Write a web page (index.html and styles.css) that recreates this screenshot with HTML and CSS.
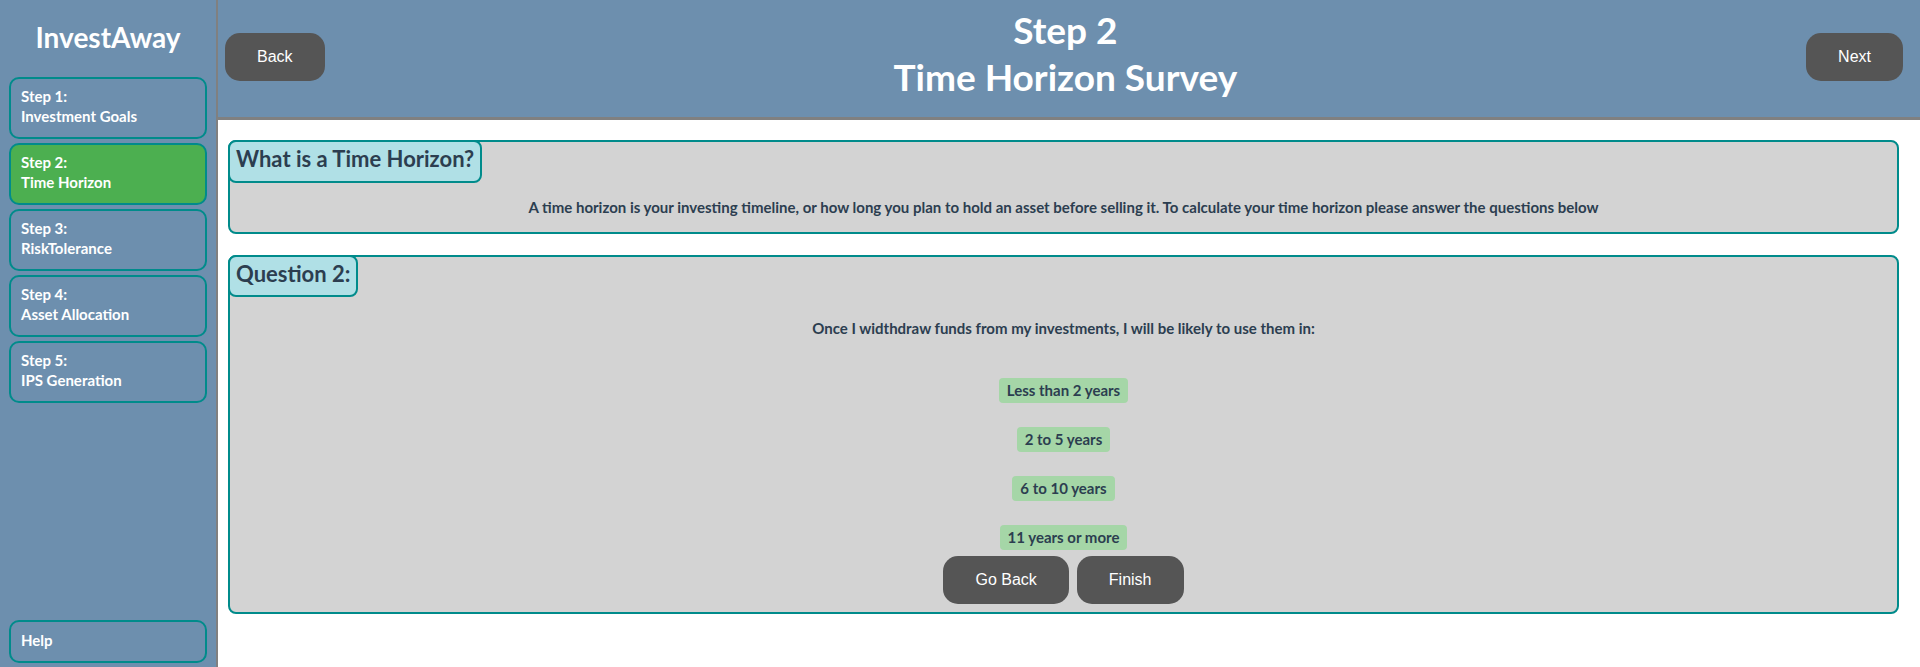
FILE: index.html
```html
<!DOCTYPE html>
<html lang="en">
<head>
<meta charset="utf-8">
<title>InvestAway - Time Horizon</title>
<link rel="stylesheet" href="styles.css">
</head>
<body>
<div class="app">
  <aside class="sidebar">
    <div class="brand">InvestAway</div>
    <nav class="steps">
      <a class="step">Step 1:<br>Investment Goals</a>
      <a class="step step-active">Step 2:<br>Time Horizon</a>
      <a class="step">Step 3:<br>RiskTolerance</a>
      <a class="step">Step 4:<br>Asset Allocation</a>
      <a class="step">Step 5:<br>IPS Generation</a>
    </nav>
    <a class="help">Help</a>
  </aside>
  <main class="main">
    <header class="topbar">
      <button class="btn">Back</button>
      <h1 class="title">Step 2<br>Time Horizon Survey</h1>
      <button class="btn">Next</button>
    </header>
    <section class="content">
      <div class="card">
        <h2 class="tab">What is a Time Horizon?</h2>
        <p class="desc">A time horizon is your investing timeline, or how long you plan to hold an asset before selling it. To calculate your time horizon please answer the questions below</p>
      </div>
      <div class="card card-q">
        <h2 class="tab">Question 2:</h2>
        <p class="question">Once I widthdraw funds from my investments, I will be likely to use them in:</p>
        <div class="options">
          <span class="option">Less than 2 years</span>
          <span class="option">2 to 5 years</span>
          <span class="option">6 to 10 years</span>
          <span class="option">11 years or more</span>
        </div>
        <div class="actions">
          <button class="btn">Go Back</button>
          <button class="btn">Finish</button>
        </div>
      </div>
    </section>
  </main>
</div>
</body>
</html>
```

FILE: styles.css
```css
* { box-sizing: border-box; }

html, body {
  margin: 0;
  padding: 0;
  height: 100%;
  background: #ffffff;
  font-family: Lato, "Open Sans", sans-serif;
}

.app {
  display: flex;
  height: 667px;
}

.sidebar {
  width: 218px;
  flex: 0 0 218px;
  background: #6d8fae;
  border-right: 2px solid #808080;
  display: flex;
  flex-direction: column;
  padding: 20px 9px 4px 9px;
}

.brand {
  color: #ffffff;
  font-weight: 700;
  font-size: 28px;
  line-height: 34px;
  text-align: center;
  margin-bottom: 23px;
}

.steps {
  display: flex;
  flex-direction: column;
  gap: 4px;
}

.step, .help {
  display: block;
  border: 2px solid #008b8b;
  border-radius: 10px;
  color: #ffffff;
  font-weight: 700;
  font-size: 15px;
  line-height: 20px;
  padding: 7px 10px 11px;
}

.step { height: 62px; }

.step-active { background: #4caf50; }

.help {
  margin-top: auto;
  height: 43px;
  padding: 8px 10px;
}

.main {
  flex: 1;
  display: flex;
  flex-direction: column;
  min-width: 0;
}

.topbar {
  height: 120px;
  background: #6d8fae;
  border-bottom: 3px solid #808080;
  display: flex;
  align-items: center;
  padding: 0 17px 3px 7px;
}

.btn {
  background: #555555;
  color: #ffffff;
  border: none;
  border-radius: 15px;
  font-family: "Liberation Sans", Arial, sans-serif;
  font-size: 16px;
  line-height: 18px;
  padding: 15px 32px;
  height: 48px;
}

.title {
  flex: 1;
  align-self: flex-start;
  margin: 0;
  padding-top: 6px;
  text-align: center;
  color: #ffffff;
  font-weight: 700;
  font-size: 37px;
  line-height: 47px;
}

.content {
  padding: 20px 21px 0 10px;
  display: flex;
  flex-direction: column;
  gap: 21px;
}

.card {
  background: #d3d3d3;
  border: 2px solid #008b8b;
  border-radius: 8px;
  color: #2c3e50;
}

.tab {
  display: inline-block;
  margin: -2px 0 0 -2px;
  background: #b0e0e6;
  border: 2px solid #008b8b;
  border-radius: 8px;
  font-size: 22px;
  font-weight: 700;
  line-height: 30px;
  padding: 2px 6px 7px;
  color: #2c3e50;
}

.desc {
  margin: 15px 0 16px;
  text-align: center;
  font-size: 15px;
  font-weight: 700;
  line-height: 18px;
}

.card-q {
  display: flex;
  flex-direction: column;
  align-items: center;
  padding-bottom: 8px;
}

.card-q .tab {
  align-self: flex-start;
  padding-bottom: 6px;
}

.question {
  margin: 22px 0 0;
  font-size: 15px;
  font-weight: 700;
  line-height: 18px;
}

.options {
  margin-top: 41px;
  display: flex;
  flex-direction: column;
  align-items: center;
  gap: 24px;
}

.option {
  background: #a5d6a7;
  border-radius: 4px;
  padding: 4px 8px;
  font-size: 15px;
  font-weight: 700;
  line-height: 17px;
}

.actions {
  margin-top: 6px;
  display: flex;
  gap: 8px;
}
```
